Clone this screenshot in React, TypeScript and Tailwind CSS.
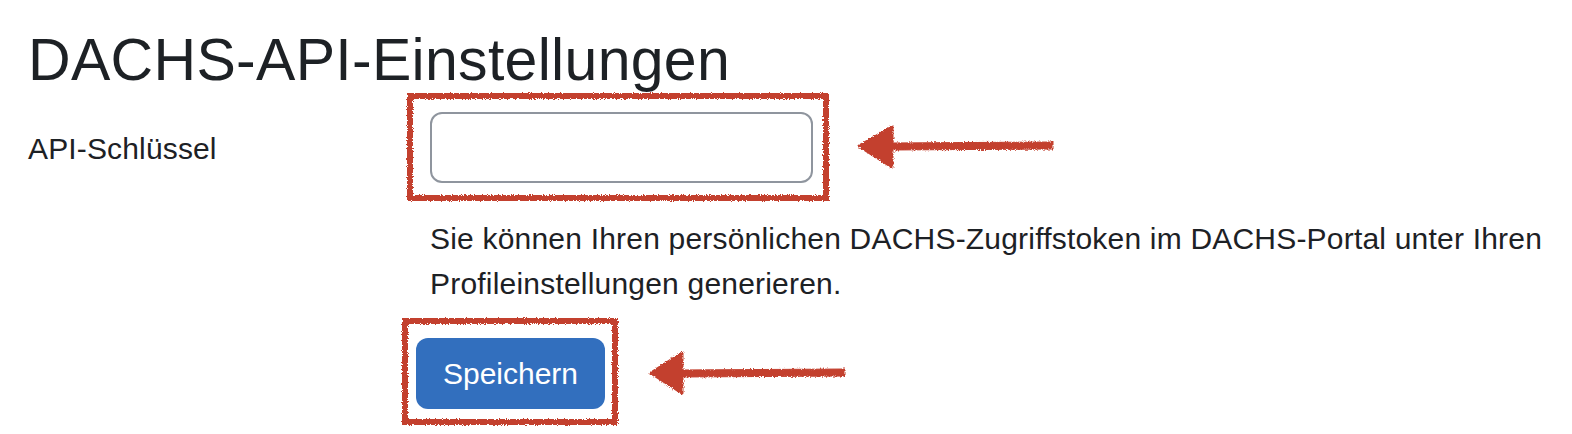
import React from 'react';

const RoughDefs = () => (
    <svg width="0" height="0" className="absolute">
        <defs>
            <filter id="rough" x="-5%" y="-5%" width="110%" height="110%">
                <feTurbulence type="fractalNoise" baseFrequency="0.9" numOctaves="2" seed="3" result="noise" />
                <feDisplacementMap in="SourceGraphic" in2="noise" scale="4" xChannelSelector="R" yChannelSelector="G" />
            </filter>
        </defs>
    </svg>
);

// hand drawn red frame laid over the wrapped control
const SketchFrame = () => (
    <div className="pointer-events-none absolute inset-0 border-[6px] border-[#c3402f] [filter:url(#rough)]" />
);

type TArrow = { width: number; height: number; tipY: number; headX: number };
const SketchArrow = ({ width, height, tipY, headX }: TArrow) => (
    <svg width={width} height={height} viewBox={`0 0 ${width} ${height}`} className="shrink-0">
        <g filter="url(#rough)" fill="#c3402f" stroke="#c3402f" strokeLinejoin="round">
            <path d={`M ${headX - 2} ${tipY - 3} L ${width - 3} ${tipY - 4} L ${width - 3} ${tipY + 3} L ${headX - 2} ${tipY + 4} Z`} strokeWidth="1" />
            <path d={`M 3 ${tipY} L ${headX} 3 L ${headX} ${height - 3} Z`} strokeWidth="3" />
        </g>
    </svg>
);

const App = () => {
    return <div className="min-h-screen bg-white px-[28px] pt-[31px] text-[#1d2125] font-['Liberation_Sans',Arial,sans-serif]">
        <RoughDefs />
        <h1 className="text-[59px] leading-none font-normal tracking-[0.3px] whitespace-nowrap">DACHS-API-Einstellungen</h1>

        <div className="mt-[3px] flex items-center">
            <label htmlFor="apikey" className="w-[379px] shrink-0 pt-[3px] text-[30px] leading-[45px] tracking-[0.15px]">API-Schlüssel</label>
            <div className="relative w-[422px] shrink-0 pl-[23px] pr-[16px] pt-[19px] pb-[18px]">
                <input id="apikey" type="text" className="block h-[71px] w-[383px] rounded-[12px] border-2 border-[#8f959e] bg-white px-4 text-[30px] outline-none" />
                <SketchFrame />
            </div>
            <div className="ml-[27px]">
                <SketchArrow width={200} height={46} tipY={22} headX={36} />
            </div>
        </div>

        <p className="ml-[402px] mt-[15px] w-[1140px] text-[30px] leading-[45px] tracking-[0.2px]">
            Sie können Ihren persönlichen DACHS-Zugriffstoken im DACHS-Portal unter Ihren Profileinstellungen generieren.
        </p>

        <div className="mt-[12px] flex items-center">
            <div className="relative ml-[374px] w-[216px] shrink-0 pl-[14px] pr-[13px] pt-[20px] pb-[16px]">
                <button className="flex h-[71px] w-[189px] items-center justify-center rounded-[12px] bg-[#326fbe] text-[30px] text-white">Speichern</button>
                <SketchFrame />
            </div>
            <div className="ml-[30px] mt-[2px]">
                <SketchArrow width={200} height={46} tipY={23} headX={34} />
            </div>
        </div>
    </div>
}

export default App
